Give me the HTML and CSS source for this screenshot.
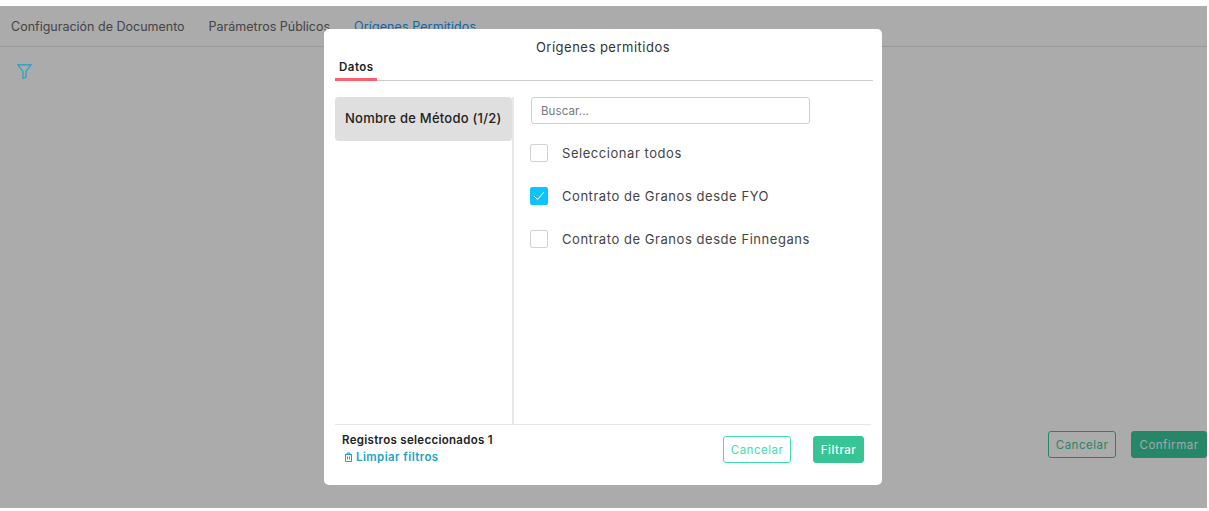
FILE: index.html
```html
<!DOCTYPE html>
<html>
<head>
  <title>Orígenes permitidos</title>
  <link rel="stylesheet" href="styles.css">
</head>
<body>
  <div class="page">
    <div class="tabs">
      <span class="tab">Configuración de Documento</span>
      <span class="tab">Parámetros Públicos</span>
      <span class="tab tab-active">Orígenes Permitidos</span>
    </div>
    <div class="filter-row">
      <svg width="15" height="15" viewBox="0 0 15 15" fill="none" stroke="#1fa3c4" stroke-width="1.2">
        <path d="M.8.8h13.400L9 7.500V13L6 14.300V7.500z"/>
      </svg>
    </div>
    <div class="page-actions">
      <button class="btn btn-outline-dim">Cancelar</button>
      <button class="btn btn-solid-dim">Confirmar</button>
    </div>

    <div class="modal">
      <div class="modal-title">Orígenes permitidos</div>
      <div class="modal-tabs"><span class="modal-tab">Datos</span></div>
      <div class="modal-body">
        <div class="side">
          <div class="side-item">Nombre de Método (1/2)</div>
        </div>
        <div class="options">
          <input class="search" type="text" placeholder="Buscar...">
          <div class="option"><span class="check"></span>Seleccionar todos</div>
          <div class="option">
            <span class="check check-on">
              <svg width="12" height="10" viewBox="0 0 12 10" fill="none" stroke="#fff" stroke-width="1"><path d="M1 5l3.500 3.500L11 1"/></svg>
            </span>Contrato de Granos desde FYO
          </div>
          <div class="option"><span class="check"></span>Contrato de Granos desde Finnegans</div>
        </div>
      </div>
      <div class="modal-footer">
        <div class="selected">
          <div class="selected-count">Registros seleccionados 1</div>
          <div class="clear-link">
            <svg width="9" height="10" viewBox="0 0 9 10" fill="none" stroke="#1fa3c4" stroke-width="1"><path d="M1 2.500h7M3 2.500V1h3v1.500M1.500 2.500V9.500h6V2.500M3.500 4.500v3M5.500 4.500v3"/></svg>
            Limpiar filtros
          </div>
        </div>
        <div class="footer-actions">
          <button class="btn btn-outline">Cancelar</button>
          <button class="btn btn-solid">Filtrar</button>
        </div>
      </div>
    </div>
  </div>
</body>
</html>
```

FILE: styles.css
```css
html, body { margin: 0; height: 100%; background: #fff; overflow: hidden; }
body { font-family: Inter, "Open Sans", sans-serif; padding: 6px 2px 3px 0; box-sizing: border-box; }
.page { position: relative; height: 502px; background: #ababab; display: flex; flex-direction: column; }
.tabs { display: flex; gap: 24px; height: 41px; padding: 13px 0 0 11px; box-sizing: border-box; border-bottom: 1px solid #999; font-size: 12.5px; color: #444; }
.tab-active { color: #0f64a8; letter-spacing: .1px; }
.filter-row { padding: 16px 0 0 17px; }
.page-actions { position: absolute; right: 0; top: 425px; display: flex; gap: 15px; }
.btn { height: 27px; box-sizing: border-box; font-family: inherit; font-size: 11.5px; font-weight: 400; letter-spacing: .5px; border-radius: 3px; padding: 0; }
.btn-outline-dim { width: 68px; background: transparent; border: 1px solid #258768; color: #258768; }
.btn-solid-dim { width: 76px; background: #258768; border: 1px solid #258768; color: #a8a8a8; }
.modal { position: absolute; left: 324px; top: 23px; width: 558px; height: 456px; background: #fff; border-radius: 5px; padding: 0 11px; box-sizing: border-box; display: flex; flex-direction: column; }
.modal-title { text-align: center; font-size: 13px; letter-spacing: .5px; color: #333; padding-top: 10px; height: 30px; box-sizing: border-box; }
.modal-tabs { height: 21px; border-bottom: 1px solid #ccc; margin-right: -2px; display: flex; }
.modal-tab { height: 18px; padding: 1px 0 0 4px; width: 38px; box-sizing: content-box; border-bottom: 3px solid #ff5f6d; font-size: 11.5px; font-weight: 600; letter-spacing: .5px; color: #222; margin-bottom: -1px; }
.modal-body { flex: 1; display: flex; padding-top: 16px; min-height: 0; }
.side { width: 177px; border-right: 2px solid #e8e8e8; }
.side-item { width: 177px; height: 44px; line-height: 43px; background: #dfdfdf; border-radius: 4px; padding-left: 10px; box-sizing: border-box; font-size: 13px; font-weight: 500; letter-spacing: .25px; color: #222; }
.options { padding-left: 17px; flex: 1; font-size: 13px; letter-spacing: .55px; color: #444; }
.search { display: block; width: 279px; height: 27px; box-sizing: border-box; border: 1px solid #ccd0d6; border-radius: 3px; padding: 0 9px; margin-bottom: 7px; font-family: inherit; font-size: 11.5px; letter-spacing: .1px; }
.search::placeholder { color: #777; }
.option { height: 43px; display: flex; align-items: center; margin-left: -1px; white-space: nowrap; }
.check { width: 18px; height: 18px; box-sizing: border-box; border: 1px solid #cfd3d8; border-radius: 2px; margin-right: 14px; display: flex; align-items: center; justify-content: center; }
.check-on { background: #0cc4fa; border-color: #0cc4fa; }
.modal-footer { height: 61px; border-top: 1px solid #e6e6e6; display: flex; justify-content: space-between; padding: 8px 7px 0; box-sizing: border-box; }
.selected-count { font-size: 11.5px; font-weight: 600; letter-spacing: .3px; color: #222; }
.clear-link { display: flex; align-items: center; gap: 3px; margin-top: 3px; padding-left: 2px; font-size: 11.5px; font-weight: 600; letter-spacing: .4px; color: #1fa3c4; }
.footer-actions { display: flex; gap: 22px; padding-top: 3px; }
.btn-outline { width: 68px; background: #fff; border: 1px solid #3fe0ae; color: #3fe0ae; }
.btn-solid { width: 51px; background: #37c595; border: 1px solid #37c595; color: #fff; font-weight: 500; }
```
